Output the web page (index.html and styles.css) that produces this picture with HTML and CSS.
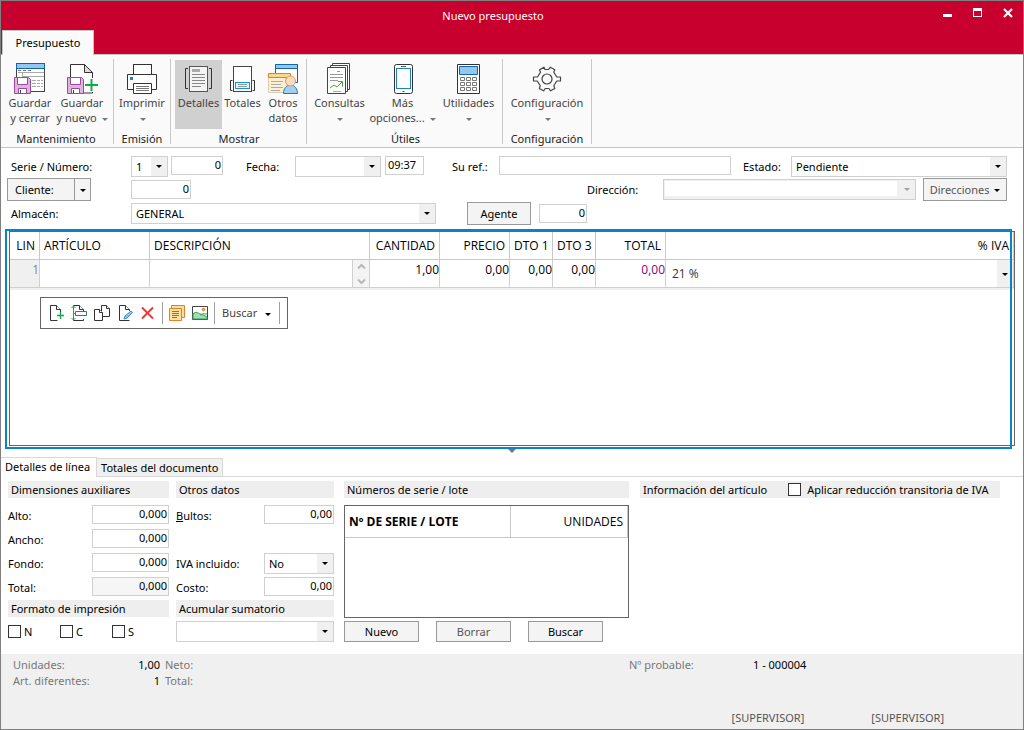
FILE: index.html
```html
<!DOCTYPE html>
<html lang="es">
<head>
<meta charset="utf-8">
<title>Nuevo presupuesto</title>
<link rel="stylesheet" href="styles.css">
</head>
<body>
<div class="window">
  <header class="titlebar">
    <div class="caption">
      <h1 class="title">Nuevo presupuesto</h1>
      <div class="win-buttons">
        <button class="win-btn" aria-label="Minimizar"><svg width="10" height="10" viewBox="0 0 10 10"><path d="M0 6h9v3H0z" fill="#fff"/></svg></button>
        <button class="win-btn" aria-label="Maximizar"><svg width="10" height="10" viewBox="0 0 10 10"><path d="M0 0h9v9H0zM1 3v5h7V3z" fill="#fff" fill-rule="evenodd"/></svg></button>
        <button class="win-btn" aria-label="Cerrar"><svg width="10" height="10" viewBox="0 0 10 10"><path d="M1 1l8 8M9 1l-8 8" stroke="#fff" stroke-width="2.2"/></svg></button>
      </div>
    </div>
    <div class="ribbon-tabs"><button class="ribbon-tab">Presupuesto</button></div>
  </header>

  <div class="ribbon">
    <section class="group">
      <div class="group-items">
        <button class="cmd w52">
          <svg width="32" height="32" viewBox="0 0 32 32" fill="none">
            <rect x="2.5" y="1.5" width="28" height="28" fill="#fff" stroke="#444"/>
            <rect x="2.5" y="1.5" width="28" height="5" fill="#92c8f0" stroke="#1464a8"/>
            <path d="M4 8.500h3m2 0h3m2 0h3" stroke="#777"/><path d="M4 10.500h26M8.500 11v5M8 14.500h22" stroke="#aaa"/>
            <path d="M18 18.500h4m1 0h3m1 0h2M18 21.500h4m1 0h3m1 0h2M18 24.500h4m1 0h3m1 0h2" stroke="#aaa"/>
            <path d="M.5 15.500h14l2 2v14H.5z" fill="#dcb4dc" stroke="#9c4a9c"/>
            <path d="M3.500 15.500h10v7h-10zM4.500 26.500h8v5h-8z" fill="#fff" stroke="#9c4a9c"/><path d="M6.500 28v3" stroke="#444"/>
          </svg>
          <span>Guardar<br>y cerrar</span>
        </button>
        <button class="cmd w52">
          <svg width="32" height="32" viewBox="0 0 32 32" fill="none">
            <path d="M4.500 31V2.500h14l8 8V31z" fill="#fff" stroke="#333"/><path d="M18.500 2.500v8h8z" fill="#ddd" stroke="#333"/>
            <path d="M1.500 15.500h14l2 2v14h-16z" fill="#dcb4dc" stroke="#9c4a9c"/>
            <path d="M4.500 15.500h10v7h-10zM5.500 26.500h8v5h-8z" fill="#fff" stroke="#9c4a9c"/><path d="M7.500 28v3" stroke="#444"/>
            <path d="M25.500 16v14M19 23h13" stroke="#fff" stroke-width="4"/><path d="M25.500 17v12M19 23h13" stroke="#14a84c" stroke-width="2"/>
          </svg>
          <span>Guardar<br>y nuevo <i class="caret"></i></span>
        </button>
      </div>
      <h2 class="group-name">Mantenimiento</h2>
    </section>

    <section class="group">
      <div class="group-items">
        <button class="cmd w52">
          <svg width="32" height="32" viewBox="0 0 32 32" fill="#fff" stroke="#333">
            <rect x="7.500" y="2.500" width="18" height="14"/><path d="M7.500 27.500h-6v-15h29v15h-5"/><path d="M7.500 21.500h18v10h-18z"/>
            <path d="M10 24.500h13M10 26.500h13M10 28.500h13" stroke="#777"/><path d="M4 15h3v3H4z" fill="#1e82d2" stroke="none"/>
          </svg>
          <span>Imprimir<br><i class="caret"></i></span>
        </button>
      </div>
      <h2 class="group-name">Emisión</h2>
    </section>

    <section class="group g-show">
      <div class="group-items">
        <button class="cmd w47 active" aria-pressed="true">
          <svg width="32" height="32" viewBox="0 0 32 32" fill="none" stroke="#333">
            <path d="M5 6.500H2.500v20H5M26 6.500h2.500v20H26"/><rect x="6.500" y="4.500" width="18" height="25" fill="#f4f4f4" stroke="#555"/>
            <path d="M9 7h8v3H9z" fill="#aaa" stroke="none"/><path d="M9 12.500h13M9 15.500h13M9 18.500h13M9 21.500h13M9 24.500h9" stroke="#888"/>
          </svg>
          <span>Detalles</span>
        </button>
        <button class="cmd w41">
          <svg width="32" height="32" viewBox="0 0 32 32" fill="none" stroke="#333">
            <path d="M5.500 18.500h-2v10h2M25.500 18.500h2v10h-2"/><rect x="6.500" y="4.500" width="18" height="25" fill="#fff" stroke="#444"/>
            <rect x="8.500" y="20.500" width="14" height="6" fill="#eee" stroke="#1496d2"/><path d="M11 22.500h9M11 24.500h9" stroke="#999"/>
          </svg>
          <span>Totales</span>
        </button>
        <button class="cmd w40">
          <svg width="32" height="32" viewBox="0 0 32 32" fill="none">
            <path d="M8.500 2.500h22v18h-22z" fill="#fff" stroke="#1464a8"/><path d="M8.500 2.500h22v4h-22z" fill="#92c8f0" stroke="#1464a8"/>
            <path d="M1.500 11.500h22v19h-22z" fill="#fdf0d0" stroke="#d8d0b0"/><path d="M1.500 11.500h22v4h-22z" fill="#fcd88c" stroke="#e08030"/>
            <path d="M4 19.500h12M4 22.500h10M4 25.500h12M4 28.500h9" stroke="#aaa"/>
            <path d="M16.500 31.500c0-5 3-8.500 7-8.500s7 3.500 7 8.500z" fill="#a4d0f0" stroke="#2878b4"/><circle cx="23.500" cy="19" r="5" fill="#fadcc0" stroke="#e09860"/>
          </svg>
          <span>Otros<br>datos</span>
        </button>
      </div>
      <h2 class="group-name">Mostrar</h2>
    </section>

    <section class="group g-utils">
      <div class="group-items">
        <button class="cmd w55">
          <svg width="32" height="32" viewBox="0 0 32 32" fill="#fff" stroke="#444">
            <path d="M8.500 1.500h17v26h-17z"/><path d="M6.500 3.500h17v26h-17z"/><path d="M3.500 5.500h18v26h-18z"/>
            <g fill="none"><path d="M13 9.500h3M6 12.500h13M6 15.500h13M6 18.500h8" stroke="#999"/><path d="M9 29.500h8" stroke="#aaa"/><path d="M6 26l4-3 3 2 5-5M14 19.500h4.500v5" stroke="#3aaa35"/></g>
          </svg>
          <span>Consultas<br><i class="caret"></i></span>
        </button>
        <button class="cmd w71">
          <svg width="32" height="32" viewBox="0 0 32 32" fill="#fff">
            <rect x="7.500" y="2.500" width="18" height="29" rx="2" stroke="#333"/><rect x="9.500" y="6.500" width="14" height="20" stroke="#1e82c8"/><path d="M14 4.500h5M15.500 29.500h2" stroke="#555"/>
          </svg>
          <span>Más<br>opciones... <i class="caret"></i></span>
        </button>
        <button class="cmd w61">
          <svg width="32" height="32" viewBox="0 0 32 32" fill="#fff">
            <path d="M4.500 2.500h22v29h-22z" stroke="#333"/><path d="M6.500 4.500h18v8h-18z" fill="#92c8f0" stroke="#1464a8"/>
            <path d="M7.500 15.500h4v3h-4zM13.500 15.500h4v3h-4zM19.500 15.500h4v3h-4zM7.500 20.500h4v3h-4zM13.500 20.500h4v3h-4zM19.500 20.500h4v3h-4zM7.500 25.500h4v3h-4zM13.500 25.500h4v3h-4zM19.500 25.500h4v3h-4z" stroke="#777"/>
          </svg>
          <span>Utilidades<br><i class="caret"></i></span>
        </button>
      </div>
      <h2 class="group-name">Útiles</h2>
    </section>

    <section class="group">
      <div class="group-items">
        <button class="cmd w84">
          <svg width="32" height="32" viewBox="0 0 32 32" fill="none" stroke="#444" stroke-width="1.200">
            <circle cx="16" cy="17" r="5"/>
            <path d="M14 7.500l-1-2.300-4.500 2.500 1 2.500-3 4.800H2.500v4h3.800l3 4.800-1 2.600 4.300 2.400 1.700-2.300h3.600l1.700 2.300 4.200-2.400-1-2.600 3-4.800h3.700v-4h-3.700l-3-4.800 1-2.500-4.500-2.500-1.700 2.300z" stroke-linejoin="round"/>
          </svg>
          <span>Configuración<br><i class="caret"></i></span>
        </button>
      </div>
      <h2 class="group-name">Configuración</h2>
    </section>
  </div>

  <form class="header-form">
    <div class="form-row row-top">
      <label class="lead" for="serie">Serie / Número:</label>
      <span class="select w37"><select id="serie"><option>1</option></select></span>
      <input class="box w52 num ml3" aria-label="Número" value="0">
      <label class="l-fecha" for="fecha">Fecha:</label>
      <span class="select w86"><select id="fecha"><option></option></select></span>
      <input class="box w39 ml4" aria-label="Hora" value="09:37">
      <label class="l-ref" for="ref">Su ref.:</label>
      <input class="box grow" id="ref">
      <label class="l-estado" for="estado">Estado:</label>
      <span class="select w216"><select id="estado"><option>Pendiente</option></select></span>
    </div>
    <div class="form-row">
      <span class="split"><button type="button" class="btn split-main">Cliente:</button><button type="button" class="btn split-arrow" aria-label="Opciones de cliente"><i class="tri"></i></button></span>
      <input class="box w60 num" aria-label="Cliente" value="0">
      <label class="l-dir" for="dir">Dirección:</label>
      <span class="select w253 disabled"><select id="dir" disabled><option></option></select></span>
      <button type="button" class="btn w84 ml7 soft">Direcciones <i class="tri"></i></button>
    </div>
    <div class="form-row">
      <label class="lead" for="almacen">Almacén:</label>
      <span class="select w305"><select id="almacen"><option>GENERAL</option></select></span>
      <button type="button" class="btn w64 agent">Agente</button>
      <input class="box w48 num ml8" aria-label="Agente" value="0">
    </div>
  </form>

  <main class="lines">
    <table class="grid">
      <colgroup><col class="c30"><col class="c110"><col class="c220"><col class="c70"><col class="c70"><col class="c43"><col class="c43"><col class="c70"><col></colgroup>
      <thead><tr><th class="r">LIN</th><th>ARTÍCULO</th><th>DESCRIPCIÓN</th><th class="r">CANTIDAD</th><th class="r">PRECIO</th><th class="r">DTO 1</th><th class="r">DTO 3</th><th class="r">TOTAL</th><th class="r">% IVA</th></tr></thead>
      <tbody><tr>
        <td class="r lin">1</td><td></td>
        <td class="desc"><div class="scroll"><svg width="9" height="24" viewBox="0 0 9 24" fill="none" stroke="#b8b8b8" stroke-width="2"><path d="M1 6.500L4.500 3 8 6.500M1 17.500L4.500 21 8 17.500"/></svg></div></td>
        <td class="r">1,00</td><td class="r">0,00</td><td class="r">0,00</td><td class="r">0,00</td><td class="r total">0,00</td>
        <td class="iva"><span class="select plain"><select aria-label="% IVA"><option>21 %</option></select></span></td>
      </tr></tbody>
    </table>
    <div class="toolbar">
      <button class="tool" aria-label="Nueva línea"><svg width="18" height="18" viewBox="0 0 18 18" fill="#fff" stroke="#333"><path d="M13.500 8V5.500l-4-4h-6v15h7"/><path d="M9.500 1.500v4h4"/><path d="M13.500 8v7M10 11.500h7" stroke="#14a84c" stroke-width="1.400"/></svg></button>
      <button class="tool" aria-label="Insertar línea"><svg width="18" height="18" viewBox="0 0 18 18" fill="#fff" stroke="#333"><path d="M13.500 15v1.500h-10V1.500h6l4 4V8"/><path d="M9.500 1.500v4h4"/><path d="M5.500 7.500h11v4h-11z" stroke="#1e78be"/><path d="M3.500 2v14M1.500 4l2-2 2 2M1.500 14l2 2 2-2M3.500 9.500h2" fill="none" stroke="#14a84c"/></svg></button>
      <button class="tool" aria-label="Duplicar línea"><svg width="18" height="18" viewBox="0 0 18 18" fill="#fff" stroke="#333"><path d="M8.500 1.500h5l3 3v8h-8z"/><path d="M13.500 1.500v3h3"/><path d="M1.500 5.500h5l3 3v8h-8z"/><path d="M6.500 5.500v3h3"/></svg></button>
      <button class="tool" aria-label="Modificar línea"><svg width="18" height="18" viewBox="0 0 18 18" fill="#fff" stroke="#333"><path d="M13.500 7V5.500l-4-4h-6v15h10"/><path d="M9.500 1.500v4h4"/><path d="M8 15l1-3 6-5 1.500 1.500-5.500 5.500z" fill="#92c8f0" stroke="#3c8cc8"/></svg></button>
      <button class="tool" aria-label="Borrar línea"><svg width="18" height="18" viewBox="0 0 18 18"><path d="M3 3.500l11 11M14 3.500l-11 11" stroke="#e83a3a" stroke-width="2"/></svg></button>
      <i class="bar"></i>
      <button class="tool" aria-label="Notas"><svg width="18" height="18" viewBox="0 0 18 18" fill="#fce0a0" stroke="#e08030"><path d="M3.500 1.500h13v12h-13z"/><path d="M1.500 4.500h12v12h-12z"/><path d="M4 7.500h7M4 9.500h7M4 11.500h7M4 13.500h5" stroke="#777"/></svg></button>
      <button class="tool" aria-label="Imagen"><svg width="18" height="18" viewBox="0 0 18 18" fill="#fff" stroke="#444"><path d="M1.500 2.500h15v13h-15z"/><path d="M2 10c3-3 5-1 7 0s4 1 7 3v2H2z" fill="#a8dcb4" stroke="#28a050"/><path d="M9 11c3-2 5-1 7-1" fill="none" stroke="#28a050"/><circle cx="12.500" cy="5.500" r="1.800" fill="#f09040" stroke="none"/></svg></button>
      <i class="bar"></i>
      <button class="find">Buscar <i class="tri"></i></button>
      <i class="bar"></i>
    </div>
  </main>

  <div class="splitter"><i></i></div>

  <nav class="tabs"><button class="tab current">Detalles de línea</button><button class="tab">Totales del documento</button></nav>

  <section class="details">
    <div class="col col-a">
      <h3 class="head">Dimensiones auxiliares</h3>
      <div class="fields">
        <label for="alto">Alto:</label><input class="box num" id="alto" value="0,000">
        <label for="ancho">Ancho:</label><input class="box num" id="ancho" value="0,000">
        <label for="fondo">Fondo:</label><input class="box num" id="fondo" value="0,000">
        <label for="dtotal">Total:</label><input class="box num readonly" id="dtotal" value="0,000" readonly>
      </div>
      <h3 class="head">Formato de impresión</h3>
      <div class="checks">
        <label><input type="checkbox" class="check">N</label>
        <label><input type="checkbox" class="check">C</label>
        <label><input type="checkbox" class="check">S</label>
      </div>
    </div>
    <div class="col col-b">
      <h3 class="head">Otros datos</h3>
      <div class="fields">
        <label for="bultos"><u>B</u>ultos:</label><input class="box num" id="bultos" value="0,00">
        <span></span><span></span>
        <label for="ivainc">IVA incluido:</label><span class="select"><select id="ivainc"><option>No</option></select></span>
        <label for="costo">Costo:</label><input class="box num" id="costo" value="0,00">
      </div>
      <h3 class="head">Acumular sumatorio</h3>
      <span class="select sum"><select aria-label="Acumular sumatorio"><option></option></select></span>
    </div>
    <div class="col col-c">
      <h3 class="head">Números de serie / lote</h3>
      <div class="serials">
        <table class="serial-grid"><thead><tr><th class="first">Nº DE SERIE / LOTE</th><th class="r">UNIDADES</th></tr></thead></table>
      </div>
      <div class="actions"><button class="btn">Nuevo</button><button class="btn soft">Borrar</button><button class="btn">Buscar</button></div>
    </div>
    <div class="col col-d">
      <div class="head info"><h3>Información del artículo</h3><label><input type="checkbox" class="check">Aplicar reducción transitoria de IVA</label></div>
    </div>
  </section>

  <footer class="status">
    <dl class="sums"><dt>Unidades:</dt><dd>1,00</dd><dt>Neto:</dt><dt>Art. diferentes:</dt><dd>1</dd><dt>Total:</dt></dl>
    <div class="probable"><span>Nº probable:</span><b>1 - 000004</b></div>
    <div class="users"><span>[SUPERVISOR]</span><span>[SUPERVISOR]</span></div>
  </footer>
</div>
</body>
</html>
```
FILE: styles.css
```css
* { box-sizing: border-box; }
body { margin: 0; font: 11px/16px "Noto Sans", "Open Sans", sans-serif; color: #000; background: #fff; }
button, input, select { font: inherit; color: inherit; margin: 0; padding: 0; border: 0; background: none; border-radius: 0; }
h1, h2, h3, dl, dd { margin: 0; font-size: 11px; font-weight: 400; }
svg { display: block; }
.window { display: flex; flex-direction: column; min-height: 100vh; border: 1px solid #808080; }

.titlebar { background: #c8002d; color: #fff; border-bottom: 1px solid #c4c4c4; }
.caption { display: grid; grid-template-columns: 1fr auto 1fr; height: 29px; padding: 7px 10px 0 0; }
.title { grid-column: 2; padding-right: 28px; }
.win-buttons { display: flex; justify-content: flex-end; gap: 20px; }
.win-btn { width: 10px; height: 10px; }
.ribbon-tabs { display: flex; padding-left: 1px; margin-bottom: -1px; }
.ribbon-tab { width: 92px; height: 25px; background: #fafafa; color: #000; border: 1px solid #c4c4c4; border-bottom: 0; }

.ribbon { display: flex; background: #fafafa; border-bottom: 1px solid #c4c4c4; padding: 4px 0 3px; }
.group { display: flex; flex-direction: column; padding: 0 2px; border-right: 1px solid #c8c8c8; height: 85px; }
.group:first-child { padding: 0 5px 0 3px; }
.g-show { padding: 0 3px 0 4px; }
.g-utils { padding: 0 3px 0 5px; }
.group-items { display: flex; padding-top: 1px; }
.group-name { margin-top: 2px; text-align: center; line-height: 16px; color: #222; white-space: nowrap; }
.cmd { display: flex; flex-direction: column; align-items: center; gap: 1px; height: 69px; padding-top: 2px; line-height: 15px; color: #444; white-space: nowrap; }
.active { background: #d0d0d0; }
.caret, .tri { display: inline-block; border: 3px solid transparent; border-top-color: #777; border-bottom: 0; vertical-align: middle; margin-left: 2px; }
.tri { border-top-color: #000; }
.w37 { width: 37px; } .w39 { width: 39px; } .w40 { width: 40px; } .w41 { width: 41px; } .w47 { width: 47px; } .w48 { width: 48px; }
.w52 { width: 52px; } .w55 { width: 55px; } .w60 { width: 60px; } .w61 { width: 61px; } .w64 { width: 64px; } .w71 { width: 71px; }
.w84 { width: 84px; } .w86 { width: 86px; } .w216 { width: 216px; } .w253 { width: 253px; } .w305 { width: 305px; }
.ml3 { margin-left: 3px; } .ml4 { margin-left: 4px; } .ml7 { margin-left: 7px; } .ml8 { margin-left: 8px; }

.box { height: 19px; border: 1px solid #d0d0d0; background: #fff; padding: 0 2px 2px; min-width: 0; }
.num { text-align: right; padding-right: 1px; }
.readonly { background: #f6f6f6; }
.select { position: relative; display: block; height: 21px; border: 1px solid #d0d0d0; background: linear-gradient(#f0f0f0, #f0f0f0) right / 16px 100% no-repeat; }
.select select { appearance: none; display: block; width: 100%; height: 19px; padding-left: 4px; }
.select::after { content: ""; position: absolute; right: 5px; top: 8px; border: 3px solid transparent; border-top-color: #000; border-bottom: 0; pointer-events: none; }
.disabled { background: linear-gradient(#fff, #fff) 1px 1px / 232px 15px no-repeat #f0f0f0; }
.disabled::after { border-top-color: #a0a0a0; }
.btn { height: 23px; border: 1px solid #999; background: #f4f4f4; text-align: center; white-space: nowrap; }
.soft { color: #555; }

.header-form { padding: 8px 16px 3px 6px; }
.form-row { display: flex; align-items: center; height: 23px; }
.form-row + .form-row { margin-top: 1px; }
.row-top { height: 21px; align-items: flex-start; }
.row-top label { padding-top: 3px; }
.form-row .select, .form-row .btn, .form-row label { flex: none; }
.lead { width: 124px; padding-left: 4px; }
.grow { flex: 1; }
.l-fecha { width: 72px; padding-left: 23px; }
.l-ref { width: 75px; padding-left: 28px; }
.l-estado { width: 60px; padding-left: 12px; }
.split { display: flex; width: 84px; margin-right: 40px; }
.split .split-main { flex: 1; text-align: left; padding-left: 7px; }
.split-arrow { width: 17px; margin-left: -1px; }
.split-arrow .tri { margin-left: 0; }
.l-dir { margin-left: auto; width: 76px; }
.agent { margin-left: 31px; }

.lines { position: relative; flex: 1; min-height: 120px; margin: 3px 8px 0 8px; border: 1px solid #666; }
.lines::after { content: ""; position: absolute; left: -5px; top: -3px; right: 2px; bottom: -4px; border: 2px solid #0a84c8; pointer-events: none; }
.grid { width: 100%; table-layout: fixed; border-collapse: separate; border-spacing: 0; font: 12px/16px "Open Sans", "Noto Sans", sans-serif; border-bottom: 2px solid #f0f0f0; }
.c30 { width: 30px; } .c43 { width: 43px; } .c70 { width: 70px; } .c110 { width: 110px; } .c220 { width: 220px; }
th { font-weight: 400; text-align: left; height: 28px; padding: 0 4px; border-right: 1px solid #c8c8c8; border-bottom: 1px solid #c8c8c8; white-space: nowrap; }
.r { text-align: right; }
.grid td { height: 28px; padding: 2px 0 0; vertical-align: top; border-right: 1px solid #d0d0d0; border-bottom: 1px solid #d0d0d0; }
.grid .lin { background: #f0f0f0; color: #888; }
.grid .total { color: #800080; }
.grid .desc, .grid .iva { padding: 0; }
.scroll { display: flex; justify-content: center; align-items: center; width: 17px; height: 27px; margin-left: auto; background: #f4f4f4; border-left: 1px solid #d0d0d0; }
.grid .select { border: 0; height: 27px; }
.grid select { height: 27px; padding-left: 6px; color: #333; }
.grid .select::after { top: 13px; }

.toolbar { display: inline-flex; align-items: center; height: 32px; margin: 7px 0 0 30px; padding: 0 7px 0 6px; border: 1px solid #666; gap: 5px; }
.tool { width: 18px; height: 18px; }
.bar { width: 1px; height: 22px; background: #a0a0a0; }
.find { width: 54px; text-align: left; padding-left: 2px; color: #444; white-space: nowrap; }
.find .tri { margin-left: 5px; }

.splitter { display: flex; justify-content: center; height: 11px; padding-top: 3px; }
.splitter i { border: 4px solid transparent; border-top-color: #777; border-bottom: 0; height: 4px; }
.tabs { display: flex; align-items: flex-end; border-bottom: 1px solid #d8d8d8; }
.tab { height: 18px; padding: 0 4px; background: #f0f0f0; border: 1px solid #d8d8d8; border-width: 1px 1px 0 0; white-space: nowrap; }
.current { height: 20px; margin-bottom: -1px; padding: 0 6px 2px 4px; background: #fff; }

.details { display: flex; padding: 4px 23px 12px 7px; }
.col { display: flex; flex-direction: column; }
.col-a { width: 161px; margin-right: 7px; }
.col-b { width: 158px; margin-right: 10px; }
.col-c { width: 285px; margin-right: 11px; }
.col-d { flex: 1; }
.head { height: 17px; line-height: 17px; padding-left: 3px; background: #eee; white-space: nowrap; }
.fields { display: grid; grid-template-columns: 1fr 77px; grid-auto-rows: 24px; margin: 7px 0 -1px; }
.col-b .fields { grid-template-columns: 1fr 70px; }
.fields label { padding-top: 3px; white-space: nowrap; }
.fields .box { width: 100%; }
.checks { display: flex; align-items: center; margin-top: 6px; height: 17px; }
.checks label { display: flex; align-items: center; gap: 3px; width: 52px; }
.check { appearance: none; width: 13px; height: 13px; border: 1px solid #333; background: #fff; flex: none; }
.sum { margin-top: 4px; }
.serials { height: 113px; margin-top: 7px; border: 1px solid #666; }
.serial-grid { width: 100%; border-spacing: 0; font: 12px/16px "Open Sans", "Noto Sans", sans-serif; }
.serial-grid th { height: 32px; }
.serial-grid .first { width: 166px; font-weight: 700; }
.actions { display: flex; gap: 17px; margin-top: 3px; }
.actions .btn { width: 75px; height: 21px; }
.info { display: flex; gap: 21px; }
.info label { display: flex; align-items: center; gap: 6px; }

.status { display: grid; grid-template-columns: 628px 1fr; height: 75px; padding: 3px 79px 3px 0; background: #f0f0f0; color: #777; align-content: space-between; }
.sums { display: grid; grid-template-columns: 102px 40px auto; column-gap: 5px; padding-left: 12px; justify-content: start; }
.sums dd { text-align: right; color: #000; }
.probable { display: flex; }
.probable span { width: 124px; }
.probable b { font-weight: 400; color: #000; }
.users { grid-column: 2; display: flex; justify-content: flex-end; gap: 67px; color: #555; }
```
